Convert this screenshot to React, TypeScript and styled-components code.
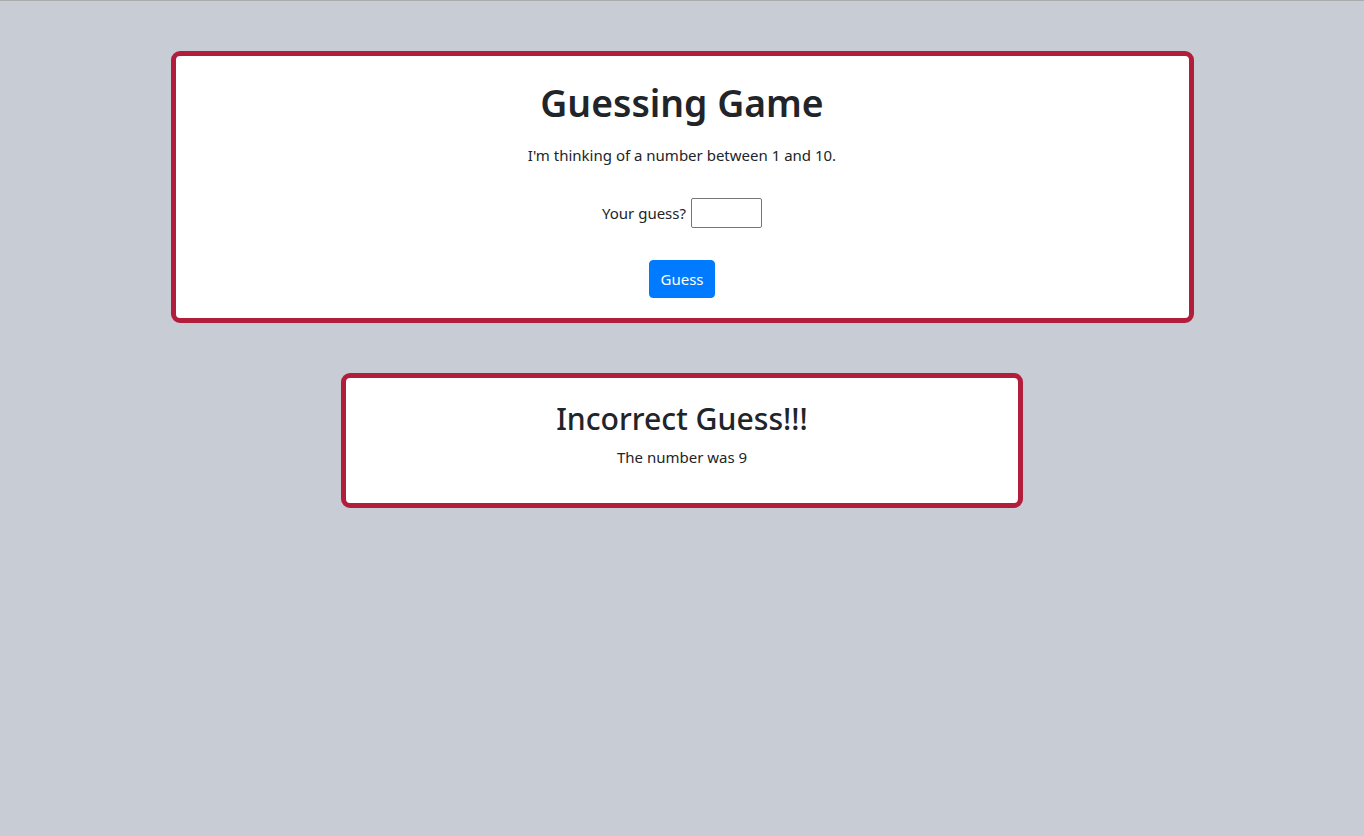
import React from 'react';
import styled, { createGlobalStyle } from 'styled-components';

const GlobalStyle = createGlobalStyle`
  html, body {
    margin: 0;
    padding: 0;
    background: #c8ccd4;
  }
  body {
    border-top: 1px solid #a9abae;
    min-height: 835px;
    font-family: 'Noto Sans', 'Open Sans', sans-serif;
    color: #212529;
    font-size: 15px;
    line-height: 1.5;
  }
`;

const Page = styled.main`
  display: flex;
  flex-direction: column;
  align-items: center;
  gap: 50px;
  padding-top: 50px;
`;

const Card = styled.section<{ $width: string }>`
  box-sizing: border-box;
  width: ${p => p.$width};
  background: #fff;
  border: 5px solid #b31d3c;
  border-radius: 9px;
  padding: 20px;
  text-align: center;
`;

const Title = styled.h1`
  margin: 3px 0 16px;
  font-size: 37.3px;
  font-weight: 600;
  line-height: 48px;
`;

const Subtitle = styled.h2`
  margin: 2px 0 7px;
  font-size: 30.2px;
  font-weight: 500;
  line-height: 38px;
`;

const Text = styled.p<{ $after?: number }>`
  margin: 0 0 ${p => p.$after ?? 0}px;
  line-height: 24px;
`;

const GuessRow = styled.label`
  display: flex;
  justify-content: center;
  align-items: center;
  gap: 5px;
  height: 30px;
  margin-top: 31px;
`;

const GuessInput = styled.input`
  box-sizing: border-box;
  width: 71px;
  height: 30px;
  border: 1px solid #767676;
  border-radius: 2px;
  background: #fff;
  font: inherit;
  padding: 2px 4px;
`;

const GuessButton = styled.button`
  margin-top: 32px;
  height: 38px;
  padding: 0 10.5px;
  border: 1px solid #007bff;
  border-radius: 4px;
  background: #007bff;
  color: #fff;
  font: inherit;
  line-height: 1.5;
  cursor: pointer;
`;

export default function App() {
  return (
    <>
      <GlobalStyle />
      <Page>
        <Card $width="75%">
          <Title>Guessing Game</Title>
          <Text>I'm thinking of a number between 1 and 10.</Text>
          <GuessRow>
            Your guess?
            <GuessInput type="text" />
          </GuessRow>
          <GuessButton>Guess</GuessButton>
        </Card>
        <Card $width="50%">
          <Subtitle>Incorrect Guess!!!</Subtitle>
          <Text $after={14}>The number was 9</Text>
        </Card>
      </Page>
    </>
  );
}
